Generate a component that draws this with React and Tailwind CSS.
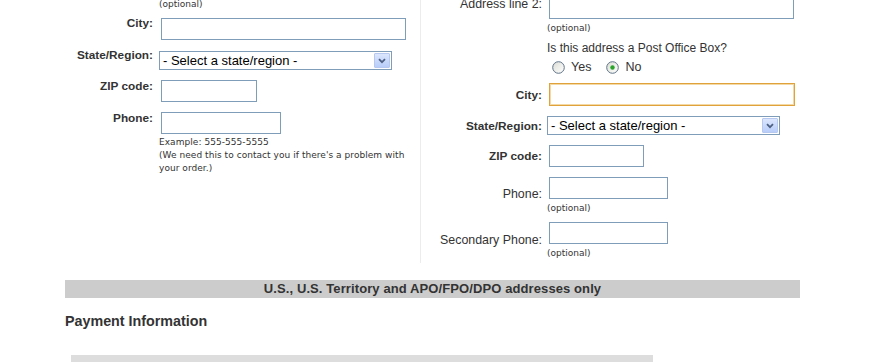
import React from "react";

const SelectBox = ({ w }) => (
  <div
    className={`relative h-[19px] ${w} border border-[#7f9db9] bg-white flex items-center`}
  >
    <span className="pl-[3px] text-[13px] leading-[17px] text-black font-['Liberation_Sans',Arial,sans-serif] whitespace-nowrap">
      - Select a state/region -
    </span>
    {/* xp style dropdown button */}
    <div className="absolute right-[1px] top-[1px] w-[16px] h-[15px] rounded-[1px] border border-[#b6c8f0] bg-gradient-to-b from-[#dce6fd] to-[#b8cdf9] flex items-center justify-center">
      <svg width="8" height="6" viewBox="0 0 8 6">
        <path d="M1 1.2 L4 4.2 L7 1.2" fill="none" stroke="#4d6185" strokeWidth="1.8" />
      </svg>
    </div>
  </div>
);

const Radio = ({ checked }) => (
  <svg width="13" height="13" viewBox="0 0 13 13">
    <defs>
      <linearGradient id="rg" x1="0" y1="0" x2="1" y2="1">
        <stop offset="0" stopColor="#dcdcd5" />
        <stop offset="1" stopColor="#ffffff" />
      </linearGradient>
    </defs>
    <circle cx="6.5" cy="6.5" r="5.8" fill="url(#rg)" stroke="#5f7488" strokeWidth="1" />
    {checked && <circle cx="6.5" cy="6.5" r="2.2" fill="#2aa42a" />}
  </svg>
);

const Small = ({ children, className = "" }) => (
  <div
    className={`text-[9px] leading-[12px] text-[#333] font-['DejaVu_Sans',Verdana,sans-serif] ${className}`}
  >
    {children}
  </div>
);

const Input = ({ w, className = "" }) => (
  <div className={`h-[22px] ${w} border border-[#7f9db9] bg-white ${className}`} />
);

export default function App() {
  const bold = "text-[11.8px] leading-[14px] font-bold text-[#333] text-right whitespace-nowrap";
  const plain = "text-[12.4px] leading-[14px] text-[#333] text-right whitespace-nowrap";

  return (
    <div className="w-[896px] h-[362px] overflow-hidden bg-white font-['Liberation_Sans',Arial,sans-serif]">
      <div className="ml-[65px] w-[735px] flex">
        {/* left column */}
        <div className="w-[355px] shrink-0">
          <div className="-mt-[2px] pl-[94px]">
            <Small>(optional)</Small>
          </div>

          <div className="mt-[6px] flex items-start">
            <div className={`w-[88px] ${bold}`}>City:</div>
            <div className="ml-[6px] mt-[2px]">
              <Input w="w-[245px]" className="ml-[2px]" />
            </div>
          </div>

          <div className="mt-[8px] flex items-start">
            <div className={`w-[88px] ${bold}`}>State/Region:</div>
            <div className="ml-[6px] mt-[3px]">
              <SelectBox w="w-[233px]" />
            </div>
          </div>

          <div className="mt-[9px] flex items-start">
            <div className={`w-[88px] ${bold}`}>ZIP code:</div>
            <div className="ml-[6px] mt-[1px]">
              <Input w="w-[96px]" className="ml-[2px]" />
            </div>
          </div>

          <div className="mt-[9px] flex items-start">
            <div className={`w-[88px] ${bold}`}>Phone:</div>
            <div className="ml-[6px] mt-[1px]">
              <Input w="w-[120px]" className="ml-[2px]" />
              <div className="mt-[2px] w-[256px] text-[9px] leading-[13px] text-[#333] font-['DejaVu_Sans',Verdana,sans-serif] tracking-[0.05px]">
                <div>Example: 555-555-5555</div>
                <div>(We need this to contact you if there's a problem with your order.)</div>
              </div>
            </div>
          </div>
        </div>

        {/* right column */}
        <div className="w-[380px] border-l border-[#ececec] pb-[4px]">
          <div className="-mt-[3px] flex items-start">
            <div className={`w-[121px] ${plain}`}>Address line 2:</div>
            <div className="ml-[5px]">
              <Input w="w-[245px]" className="ml-[2px]" />
              <Small className="mt-[3px]">(optional)</Small>
              <div className="mt-[7px] text-[12px] leading-[14px] text-[#333] whitespace-nowrap">
                Is this address a Post Office Box?
              </div>
              <div className="mt-[5px] ml-[5px] h-[14px] flex items-center text-[12.5px] text-[#333]">
                <Radio />
                <span className="ml-[6px]">Yes</span>
                <span className="ml-[15px] flex items-center">
                  <Radio checked />
                </span>
                <span className="ml-[6px]">No</span>
              </div>
            </div>
          </div>

          <div className="mt-[9px] flex items-center">
            <div className={`w-[121px] ${bold}`}>City:</div>
            <div className="ml-[5px]">
              <div className="ml-[2px] h-[23px] w-[246px] border border-[#e0a23a] shadow-[inset_0_0_0_1px_#f3d9a6] bg-white" />
            </div>
          </div>

          <div className="mt-[10px] flex items-center">
            <div className={`w-[121px] ${bold}`}>State/Region:</div>
            <div className="ml-[5px]">
              <SelectBox w="w-[233px]" />
            </div>
          </div>

          <div className="mt-[10px] flex items-center">
            <div className={`w-[121px] ${bold}`}>ZIP code:</div>
            <div className="ml-[5px]">
              <Input w="w-[95px]" className="ml-[2px]" />
            </div>
          </div>

          <div className="mt-[10px] flex items-end">
            <div className={`w-[121px] ${plain} -mb-[2px]`}>Phone:</div>
            <div className="ml-[5px]">
              <Input w="w-[119px]" className="ml-[2px]" />
            </div>
          </div>
          <Small className="ml-[126px] mt-[3px]">(optional)</Small>

          <div className="mt-[8px] flex items-end">
            <div className={`w-[121px] ${plain} -mb-[3px]`}>Secondary Phone:</div>
            <div className="ml-[5px]">
              <Input w="w-[119px]" className="ml-[2px]" />
            </div>
          </div>
          <Small className="ml-[126px] mt-[3px]">(optional)</Small>
        </div>
      </div>

      <div className="ml-[65px] mt-[17px] w-[735px] h-[18px] bg-[#cccccc] text-center text-[13px] leading-[18px] font-bold text-[#333] tracking-[0.1px]">
        U.S., U.S. Territory and APO/FPO/DPO addresses only
      </div>

      <div className="ml-[65px] mt-[15px] text-[14.3px] leading-[16px] font-bold text-[#333]">
        Payment Information
      </div>

      <div className="ml-[71px] mt-[26px] w-[582px] h-[20px] bg-[#dddddd]" />
    </div>
  );
}
